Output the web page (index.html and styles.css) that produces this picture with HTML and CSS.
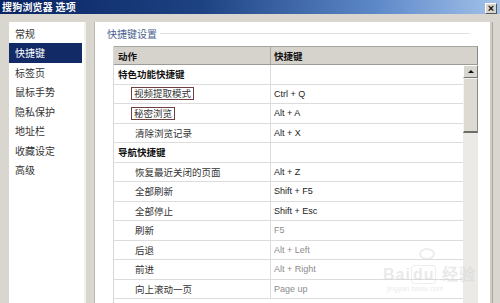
FILE: index.html
```html
<!DOCTYPE html>
<html lang="zh-CN">
<head>
  <meta charset="UTF-8">
  <title>搜狗浏览器 选项</title>
  <link rel="stylesheet" href="styles.css">
</head>
<body>
  <div class="window">
    <div class="titlebar">
      <span class="title">搜狗浏览器 选项</span>
      <span class="close">×</span>
    </div>

    <div class="main">
      <ul class="sidebar">
        <li>常规</li>
        <li class="active">快捷键</li>
        <li>标签页</li>
        <li>鼠标手势</li>
        <li>隐私保护</li>
        <li>地址栏</li>
        <li>收藏设定</li>
        <li>高级</li>
      </ul>

      <div class="content">
        <div class="group-title"><span>快捷键设置</span></div>

        <div class="table-wrap">
          <div class="table">
            <div class="row head"><div>动作</div><div>快捷键</div></div>

            <div class="row section"><div>特色功能快捷键</div><div></div></div>
            <div class="row"><div class="sub"><span class="boxed">视频提取模式</span></div><div>Ctrl + Q</div></div>
            <div class="row"><div class="sub"><span class="boxed">秘密浏览</span></div><div>Alt + A</div></div>
            <div class="row"><div class="sub">清除浏览记录</div><div>Alt + X</div></div>

            <div class="row section"><div>导航快捷键</div><div></div></div>
            <div class="row"><div class="sub">恢复最近关闭的页面</div><div>Alt + Z</div></div>
            <div class="row"><div class="sub">全部刷新</div><div>Shift + F5</div></div>
            <div class="row"><div class="sub">全部停止</div><div>Shift + Esc</div></div>
            <div class="row"><div class="sub">刷新</div><div class="dim">F5</div></div>
            <div class="row"><div class="sub">后退</div><div class="dim">Alt + Left</div></div>
            <div class="row"><div class="sub">前进</div><div class="dim">Alt + Right</div></div>
            <div class="row"><div class="sub">向上滚动一页</div><div class="dim">Page up</div></div>
          </div>

          <div class="scrollbar">
            <div class="sb-head"></div>
            <div class="sb-btn"><span class="arrow"></span></div>
            <div class="sb-thumb"></div>
            <div class="sb-track"></div>
          </div>
        </div>

        <div class="watermark">
          <span class="paw"></span>
          <div class="wm-big">Bai<span class="du">du</span> 经验</div>
          <div class="wm-small">jingyan.baidu.com</div>
        </div>
      </div>
    </div>
  </div>
</body>
</html>
```

FILE: styles.css
```css
* { box-sizing: border-box; }
body { margin: 0; width: 500px; height: 303px; overflow: hidden; background: #d8d6cf; font-family: "Noto Sans CJK SC", "Liberation Sans", sans-serif; color: #222; }

.titlebar { height: 14px; display: flex; align-items: center; justify-content: space-between; padding: 0 3px 0 2px; background: linear-gradient(to right, #0a2462 0%, #1d4282 40%, #5d88c8 75%, #a3c2ea 100%); }
.title { color: #fff; font-size: 10px; font-weight: bold; line-height: 14px; letter-spacing: 0.2px; }
.close { width: 12px; height: 11px; margin-top: 2px; background: #d8d6cf; border: 1px solid #fff; border-right-color: #555; border-bottom-color: #555; font: bold 11px/8px "Liberation Sans", sans-serif; text-align: center; color: #111; }

.main { display: flex; padding: 8px 0 0 9px; height: 289px; overflow: hidden; }

.sidebar { list-style: none; margin: 0; padding: 1.5px 0 0; width: 77px; height: 100%; background: #fff; border-right: 2px solid #f2f2ef; }
.sidebar li { height: 19.5px; line-height: 19.5px; padding-left: 6px; font-size: 10px; color: #333; }
.sidebar li.active { background: #122a66; color: #fff; margin-right: 2px; }

.content { position: relative; width: 395px; margin-left: 9px; height: 100%; background: #fff; box-shadow: -1px 0 0 #b9b7b0, 2px 0 0 #cfcdc6, 3px 0 0 #a9a7a0; }

.group-title { display: flex; align-items: center; padding: 4px 0 0 12px; height: 18px; }
.group-title span { font-size: 10px; color: #4a5f8f; padding-right: 3px; }
.group-title::after { content: ""; flex: 1; height: 1px; margin-right: 20px; background: #e2e2e0; }

.table-wrap { display: flex; margin: 6px 0 0 18px; width: 365px; height: 260px; }
.table { width: 350px; border-left: 1px solid #d8d8d8; }

.row { display: grid; grid-template-columns: 157px 1fr; height: 19.5px; border-bottom: 1px solid #dcdcdc; }
.row > div { display: flex; align-items: center; font-size: 9px; font-family: "Liberation Sans", sans-serif; white-space: nowrap; }
.row > div:first-child { font-family: "Noto Sans CJK SC", sans-serif; font-size: 9.5px; padding-left: 4px; border-right: 1px solid #dcdcdc; }
.row > div:last-child { padding-left: 3px; }

.row.head { height: 19px; background: #d6d3cc; border-top: 1px solid #a8a6a0; border-bottom: 1px solid #9d9b95; }
.row.head > div { font-family: "Noto Sans CJK SC", sans-serif; font-size: 9.5px; font-weight: bold; color: #111; }
.row.head > div:first-child { border-right: 1px solid #aaa8a2; }

.row.section > div:first-child { font-weight: bold; color: #111; }
.row .sub { padding-left: 21px !important; color: #333; }
.boxed { border: 1px solid #6e4040; padding: 0 2px; margin-left: -4px; line-height: 11px; background: #fff; }
.dim { color: #8c8c8c; }

.scrollbar { width: 15px; display: flex; flex-direction: column; }
.sb-head { height: 19px; background: #d6d3cc; border-top: 1px solid #a8a6a0; border-bottom: 1px solid #9d9b95; border-right: 1px solid #888; }
.sb-btn { height: 13px; background: #d8d6cf; border: 1px solid #fff; border-right-color: #777; border-bottom-color: #777; display: flex; align-items: center; justify-content: center; }
.arrow { width: 0; height: 0; border-left: 3px solid transparent; border-right: 3px solid transparent; border-bottom: 3px solid #111; }
.sb-thumb { height: 55px; background: #dcdad3; border: 1px solid #f4f4f2; border-right-color: #8c8a85; border-bottom: 2px solid #6f6d68; }
.sb-track { flex: 1; background: #ebeae6; }

.watermark { position: absolute; left: 288px; top: 226px; color: rgba(215, 215, 215, 0.55); font-family: "Liberation Sans", sans-serif; }
.paw { position: absolute; left: 36px; top: 0; width: 16px; height: 12px; border: 2px solid rgba(220, 220, 220, 0.5); border-radius: 50%; }
.wm-big { margin-top: 13px; font-size: 16px; font-weight: bold; letter-spacing: 1px; }
.wm-big .du { border: 1px solid rgba(220, 220, 220, 0.5); border-radius: 3px; padding: 0 1px; }
.wm-small { font-size: 7px; margin-left: 4px; }
```
